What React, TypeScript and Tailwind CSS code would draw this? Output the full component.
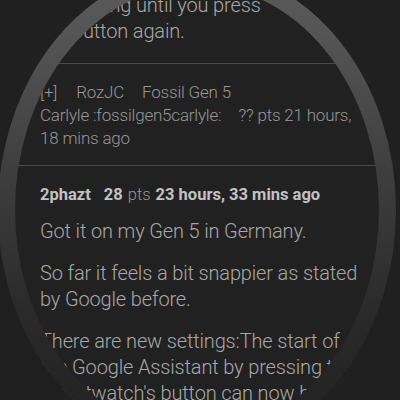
import React from "react";

/** Round-watch bezel: masks the corners and draws the shaded ring. */
function Bezel() {
  return (
    <svg
      className="pointer-events-none absolute inset-0"
      width={400}
      height={400}
      viewBox="0 0 400 400"
      aria-hidden="true"
    >
      <defs>
        <linearGradient id="ring" x1="0" y1="0" x2="0" y2="1">
          <stop offset="0" stopColor="#5a5a5a" />
          <stop offset="0.12" stopColor="#555555" />
          <stop offset="0.45" stopColor="#3c3c3c" />
          <stop offset="0.72" stopColor="#2a2a2a" />
          <stop offset="0.9" stopColor="#242424" />
          <stop offset="1" stopColor="#222222" />
        </linearGradient>
      </defs>
      <path
        fill="#202020"
        fillRule="evenodd"
        d="M-10 -10H410V410H-10Z M197 -32a199 242 0 1 0 0.01 0Z"
      />
      <ellipse
        cx={197}
        cy={210}
        rx={190.5}
        ry={233.5}
        fill="none"
        stroke="url(#ring)"
        strokeWidth={17}
      />
    </svg>
  );
}

function Divider() {
  return <div className="h-px w-full bg-[#4a4a4a]" />;
}

export default function App() {
  return (
    <div className="relative h-[400px] w-[400px] overflow-hidden bg-[#212121] font-['Roboto','Liberation_Sans',sans-serif] text-[#a8a8a8]">
      <div className="-mt-[8px] flex flex-col">
        <p className="pl-[40px] pr-[34px] text-[20px] font-light leading-[26px] tracking-[-0.15px]">
          is listening until you press
          <br />
          the button again.
        </p>

        <div className="mt-[19px]">
          <Divider />
        </div>

        <div className="pl-[40px] pr-[28px] pt-[17px] pb-[15px] text-[17px] font-light leading-[23px] tracking-[-0.2px] text-[#979797]">
          <span className="mr-[19px]">[+]</span>
          <span className="mr-[18px]">RozJC</span>
          <span>Fossil Gen 5</span>
          <br />
          <span className="mr-[17px]">Carlyle :fossilgen5carlyle:</span>
          <span>?? pts 21 hours, 18 mins ago</span>
        </div>

        <Divider />

        <div className="flex flex-col pl-[40px] pr-[34px] pt-[17px]">
          <div className="text-[16.5px] leading-[24px] text-[#c2c2c2]">
            <span className="mr-[13px] font-bold">2phazt</span>
            <span className="font-bold">28</span>
            <span className="mx-[5px] font-light text-[#979797]">pts</span>
            <span className="font-bold">23 hours, 33 mins ago</span>
          </div>
          <div className="mt-[11px] flex flex-col gap-[16px] text-[20px] font-light leading-[26px] tracking-[-0.15px]">
            <p>Got it on my Gen 5 in Germany.</p>
            <p>So far it feels a bit snappier as stated by Google before.</p>
            <p>
              There are new settings:The start of the Google Assistant by pressing the
              smartwatch's button can now be changed.
            </p>
          </div>
        </div>
      </div>
      <Bezel />
    </div>
  );
}
